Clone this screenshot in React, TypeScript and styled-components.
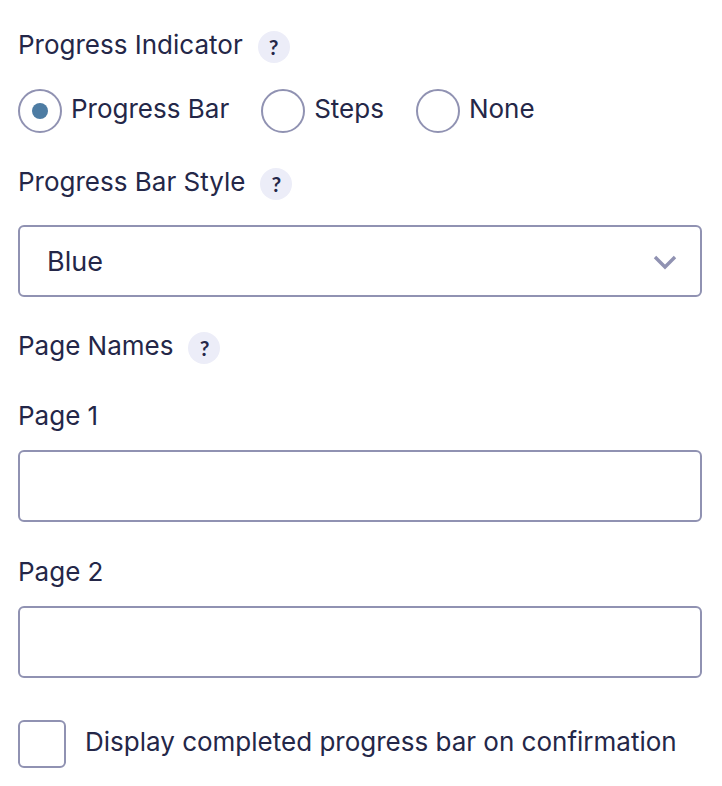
import React, { useState } from "react";
import styled, { createGlobalStyle } from "styled-components";

const ink = "#242748";
const line = "#9092b2";
const accent = "#4d7ca3";

const GlobalStyle = createGlobalStyle`
  *, *::before, *::after { box-sizing: border-box; }
  body {
    margin: 0;
    background: #ffffff;
    color: ${ink};
    font-family: Inter, "Liberation Sans", sans-serif;
    font-size: 26px;
    line-height: 32px;
  }
`;

const Panel = styled.form`
  display: flex;
  flex-direction: column;
  padding: 27px 20px 18px 18px;
`;

const Fieldset = styled.fieldset`
  margin: 0;
  padding: 0;
  border: 0;
  min-width: 0;
`;

const Heading = styled.div`
  display: flex;
  align-items: center;
  gap: 15px;
  padding-bottom: 2px;
`;

const HelpButton = styled.button`
  width: 32px;
  height: 32px;
  margin-top: 4px;
  padding: 0;
  border: 0;
  border-radius: 50%;
  background: #ecedf8;
  color: ${ink};
  font-family: Lato, "Open Sans", sans-serif;
  font-size: 21px;
  font-weight: 700;
  line-height: 32px;
  text-align: center;
  cursor: pointer;
`;

const RadioRow = styled.div`
  display: flex;
  flex-wrap: wrap;
  gap: 32px;
  margin: 24px 0 31px;
`;

const RadioLabel = styled.label`
  display: flex;
  gap: 9px;
  line-height: 40px;
`;

const Radio = styled.input`
  appearance: none;
  flex: none;
  display: grid;
  place-items: center;
  width: 44px;
  height: 44px;
  margin: 0;
  border: 2px solid ${line};
  border-radius: 50%;
  background: #ffffff;

  &:checked::before {
    content: "";
    width: 16px;
    height: 16px;
    border-radius: 50%;
    background: ${accent};
  }
`;

const SelectBox = styled.div`
  display: grid;
  align-items: center;
  margin: 23px 0 31px;

  > * { grid-area: 1 / 1; }

  > svg {
    justify-self: end;
    margin-right: 25px;
    pointer-events: none;
  }
`;

const Select = styled.select`
  appearance: none;
  width: 100%;
  height: 72px;
  padding: 2px 64px 0 27px;
  border: 2px solid ${line};
  border-radius: 6px;
  background: #ffffff;
  color: ${ink};
  font: inherit;
  font-size: 27px;
`;

const Field = styled.div`
  display: flex;
  flex-direction: column;
  gap: 18px;
  margin-top: 34px;
`;

const TextInput = styled.input`
  width: 100%;
  height: 72px;
  padding: 0 27px;
  border: 2px solid ${line};
  border-radius: 6px;
  background: #ffffff;
  color: ${ink};
  font: inherit;
`;

const CheckLabel = styled.label`
  display: flex;
  gap: 19px;
  margin-top: 42px;
  line-height: 44px;
`;

const Checkbox = styled.input`
  appearance: none;
  flex: none;
  display: grid;
  place-items: center;
  width: 48px;
  height: 48px;
  margin: 0;
  border: 2px solid ${line};
  border-radius: 6px;
  background: #ffffff;

  &:checked::before {
    content: "";
    width: 24px;
    height: 24px;
    border-radius: 3px;
    background: ${accent};
  }
`;

function Help({ topic }: { topic: string }) {
  return (
    <HelpButton type="button" aria-label={`Help: ${topic}`}>
      ?
    </HelpButton>
  );
}

const indicators = ["Progress Bar", "Steps", "None"];
const pages = ["Page 1", "Page 2"];

export default function App() {
  const [indicator, setIndicator] = useState(indicators[0]);

  return (
    <>
      <GlobalStyle />
      <Panel>
        <Heading>
          <span id="indicator-label">Progress Indicator</span>
          <Help topic="Progress Indicator" />
        </Heading>
        <RadioRow role="radiogroup" aria-labelledby="indicator-label">
          {indicators.map((name) => (
            <RadioLabel key={name}>
              <Radio
                type="radio"
                name="indicator"
                value={name}
                checked={indicator === name}
                onChange={() => setIndicator(name)}
              />
              {name}
            </RadioLabel>
          ))}
        </RadioRow>

        <Heading>
          <label htmlFor="bar-style">Progress Bar Style</label>
          <Help topic="Progress Bar Style" />
        </Heading>
        <SelectBox>
          <Select id="bar-style" defaultValue="Blue">
            <option>Blue</option>
            <option>Green</option>
          </Select>
          <svg width="24" height="18" viewBox="0 0 24 18" fill="none" aria-hidden="true">
            <path d="M2 5l10 10L22 5" stroke={line} strokeWidth="3.4" />
          </svg>
        </SelectBox>

        <Fieldset aria-labelledby="pages-label">
          <Heading>
            <span id="pages-label">Page Names</span>
            <Help topic="Page Names" />
          </Heading>
          {pages.map((name, i) => (
            <Field key={name}>
              <label htmlFor={`page-${i + 1}`}>{name}</label>
              <TextInput id={`page-${i + 1}`} type="text" />
            </Field>
          ))}
        </Fieldset>

        <CheckLabel>
          <Checkbox type="checkbox" />
          Display completed progress bar on confirmation
        </CheckLabel>
      </Panel>
    </>
  );
}
